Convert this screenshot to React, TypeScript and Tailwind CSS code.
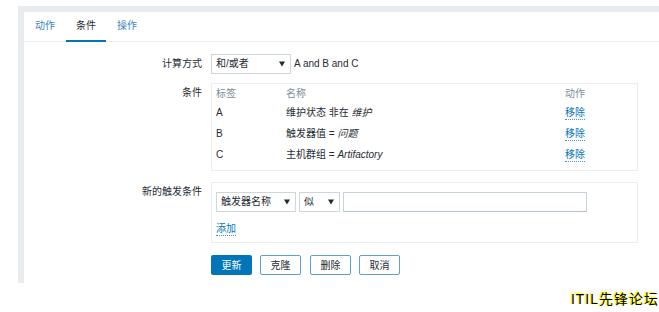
import { Fragment } from "react";

const font = "font-['Liberation_Sans','Noto_Sans_CJK_SC',sans-serif]";

function Select({ label, className }: { label: string; className?: string }) {
    return (
        <div className={`flex items-center justify-between h-[20px] border border-[#cfd6db] bg-white pl-[4px] pr-[5px] ${className}`}>
            <span className="leading-[14px]">{label}</span>
            <svg width="6" height="6" viewBox="0 0 6 6" className="mb-[1px]">
                <path d="M0 0.5 H6 L3 5.5 Z" fill="#1f2c33" />
            </svg>
        </div>
    );
}

function Link({ children }: { children: string }) {
    return (
        <span className="text-[#0275b8] leading-[13px] border-b border-dotted border-[#4a95c9]">{children}</span>
    );
}

const conditions = [
    { tag: "A", name: "维护状态 非在 ", value: "维护" },
    { tag: "B", name: "触发器值 = ", value: "问题" },
    { tag: "C", name: "主机群组 = ", value: "Artifactory" },
];

export default function App() {
    return (
        <div className={`w-[659px] h-[312px] bg-white overflow-hidden text-[10px] text-[#1f2c33] ${font}`}>
            <div className="ml-[18px] mt-[6px] bg-[#e9ecef] pt-[6px] pl-[6px]">
                <div className="bg-white h-[271px] flex flex-col">
                    {/* tabs */}
                    <div className="flex h-[30px] border-b border-[#ebeef0] pl-[1px] gap-[1px]">
                        <div className="px-[10px] flex items-center pb-[2px] text-[#3c84bd]">动作</div>
                        <div className="px-[10px] flex items-center pb-[1px] border-b-2 border-[#0275b8] -mb-px">条件</div>
                        <div className="px-[10px] flex items-center pb-[2px] text-[#3c84bd]">操作</div>
                    </div>

                    <div className="flex flex-col pt-[12px]">
                        {/* calc type */}
                        <div className="flex items-center gap-[9px]">
                            <div className="w-[178px] text-right leading-[14px]">计算方式</div>
                            <Select label="和/或者" className="w-[80px]" />
                            <span className="-ml-[6px] leading-[14px]">A and B and C</span>
                        </div>

                        {/* conditions */}
                        <div className="flex gap-[9px] mt-[9px]">
                            <div className="w-[178px] text-right leading-[14px] pt-[3px]">条件</div>
                            <div className="w-[427px] border border-[#ebeef0] pl-[4px] pb-[5px]">
                                <div className="grid grid-cols-[70px_279px_auto] items-center">
                                    <div className="h-[18px] flex items-center text-[#7b8e99]">标签</div>
                                    <div className="h-[18px] flex items-center text-[#7b8e99]">名称</div>
                                    <div className="h-[18px] flex items-center text-[#7b8e99]">动作</div>
                                    {conditions.map((c) => (
                                        <Fragment key={c.tag}>
                                            <div className="h-[21px] flex items-center">{c.tag}</div>
                                            <div className="h-[21px] flex items-center whitespace-pre">
                                                {c.name}
                                                <i>{c.value}</i>
                                            </div>
                                            <div className="h-[21px] flex items-center">
                                                <Link>移除</Link>
                                            </div>
                                        </Fragment>
                                    ))}
                                </div>
                            </div>
                        </div>

                        {/* new condition */}
                        <div className="flex gap-[9px] mt-[11px]">
                            <div className="w-[178px] text-right leading-[14px] pt-[3px]">新的触发条件</div>
                            <div className="w-[427px] h-[61px] border border-[#ebeef0] pl-[4px] pt-[9px]">
                                <div className="flex gap-[3px]">
                                    <Select label="触发器名称" className="w-[80px]" />
                                    <Select label="似" className="w-[41px]" />
                                    <div className="w-[244px] h-[20px] border border-[#c6d2da] border-b-[#b3c2cc] bg-white" />
                                </div>
                                <div className="mt-[9px] h-[15px] flex items-center">
                                    <Link>添加</Link>
                                </div>
                            </div>
                        </div>

                        {/* buttons */}
                        <div className="flex gap-[8px] mt-[12px] ml-[187px]">
                            <button className="w-[41px] h-[20px] rounded-[2px] bg-[#0275b8] text-white text-[10px]">更新</button>
                            <button className="w-[41px] h-[20px] rounded-[2px] border border-[#5e9fd0] bg-white text-[#1f2c33] text-[10px]">克隆</button>
                            <button className="w-[41px] h-[20px] rounded-[2px] border border-[#5e9fd0] bg-white text-[#1f2c33] text-[10px] ml-[1px]">删除</button>
                            <button className="w-[41px] h-[20px] rounded-[2px] border border-[#5e9fd0] bg-white text-[#1f2c33] text-[10px]">取消</button>
                        </div>
                    </div>
                </div>
            </div>

            <div className="flex justify-end mt-[8px]">
                <span className="text-[14px] leading-[16px] tracking-[1px] text-black [text-shadow:-1px_0_0_#ffff00,-1px_-1px_0_#ffff00]">ITIL先锋论坛</span>
            </div>
        </div>
    );
}
